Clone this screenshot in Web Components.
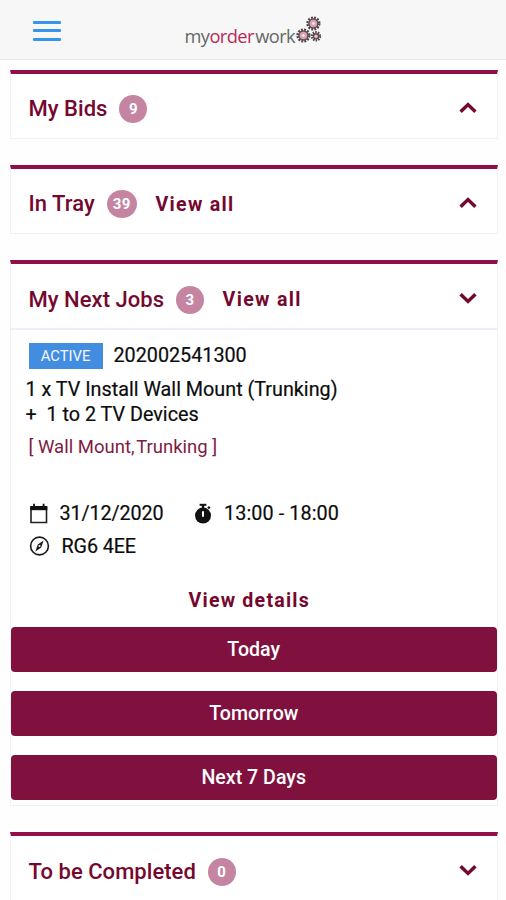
<!DOCTYPE html>
<html lang="en">
<head>
<meta charset="utf-8">
<title>myorderwork</title>
<style>
body{margin:0;background:#fefefe;font-family:Roboto,"Liberation Sans",sans-serif;width:506px;height:900px;overflow:hidden;color:#111}
</style>
</head>
<body>
<work-app></work-app>
<script>
const define = (name, html, setup) => customElements.define(name, class extends HTMLElement {
  constructor() {
    super();
    const t = document.createElement('template');
    t.innerHTML = html;
    this.attachShadow({mode: 'open'}).append(t.content.cloneNode(true));
  }
  connectedCallback() { if (setup) setup(this, this.shadowRoot); }
});

// Toothed ring used in the logo
const gear = (x, y, r, n) => {
  const c = 2 * Math.PI * r;
  return `<circle cx="${x}" cy="${y}" r="${r}" fill="none" stroke="#4c4649" stroke-width="2.4" stroke-dasharray="${c/n*.6} ${c/n*.4}"/>
  <circle cx="${x}" cy="${y}" r="${r-1.4}" fill="#dca2b2" stroke="#5d4c53" stroke-width="1.4"/>
  <circle cx="${x}" cy="${y}" r="${r*.3}" fill="#f7eef0" stroke="#cf8fa1" stroke-width=".6"/>`;
};

define('brand-logo', `<style>
:host{display:flex;align-items:flex-start;font-family:"Open Sans","Noto Sans",sans-serif;font-size:18.3px;line-height:24px;color:#666}
.word{padding-top:9px;white-space:nowrap;letter-spacing:-.6px}
b{font-weight:400;color:#b72a58;margin-right:1.5px}
svg{display:block}
</style><span class="word">my<b>order</b>work</span>
<svg width="28" height="30" viewBox="0 0 28 30">${gear(8.4,20.5,5.9,12)}${gear(18.4,8.5,5.9,12)}${gear(21,21.3,4,10)}</svg>`);

define('menu-button', `<style>
:host{display:flex;flex-direction:column;gap:5.5px;width:28px}
i{height:3px;background:#3595ee;border-radius:1px}
</style><i></i><i></i><i></i>`);

define('app-header', `<style>
:host{display:grid;grid-template-columns:184.5px auto 1fr;height:59px;background:#f7f7f7;border-bottom:1px solid #e9e9e9}
menu-button{margin:20.5px 0 0 33px}
brand-logo{margin-top:15px}
</style><menu-button></menu-button><brand-logo></brand-logo>`);

define('count-badge', `<style>
:host{display:flex;align-items:center;justify-content:center;box-sizing:border-box;min-width:28px;height:28px;border-radius:50%;background:#c585a2;color:#fff;font-size:15px;font-weight:700;line-height:28px;padding:0 6px;letter-spacing:.5px}
</style><slot></slot>`);

define('text-link', `<style>
:host{display:block;color:#75082f;font-size:19.6px;line-height:24px;font-weight:700;letter-spacing:1.3px;white-space:nowrap}
</style><slot></slot>`);

define('chevron-icon', `<style>
:host{display:block;width:20px;height:14px;margin-top:4.5px}
:host([up]) svg{transform:rotate(180deg)}
svg{display:block}
</style><svg width="20" height="14" viewBox="0 0 20 14"><path d="M2.6 3.2 10 10.4 17.4 3.2" fill="none" stroke="#75082f" stroke-width="3.5"/></svg>`);

define('job-panel', `<style>
:host{display:block;box-sizing:border-box;border:1.5px solid #f0f0f6;border-top:4.6px solid #920e49;background:#fff}
header{display:flex;align-items:center;height:64px;padding:0 19.5px 0 18px}
:host([open]) header{border-bottom:2px solid #efeffa}
h2{margin:7px 12px 0 0;font-size:22px;line-height:28px;font-weight:500;color:#75082f;white-space:nowrap;letter-spacing:.04px}
::slotted(count-badge){margin:7px 18.5px 0 0}
::slotted(text-link){margin-top:8px}
chevron-icon{margin-left:auto}
</style><header><h2></h2><slot name="head"></slot><chevron-icon></chevron-icon></header><slot></slot>`,
(el, root) => {
  root.querySelector('h2').textContent = el.getAttribute('heading');
  root.querySelector('chevron-icon').toggleAttribute('up', el.hasAttribute('up'));
});

define('status-tag', `<style>
:host{display:block;width:74px;height:26px;background:#438de0;color:#f3f8ff;text-align:center;font-size:14.8px;line-height:27px;-webkit-text-stroke:0}
</style><slot></slot>`);

define('action-button', `<style>
:host{display:block;height:45px;border-radius:4px;background:#80113e;color:#fff;text-align:center;font-size:19.6px;font-weight:500;line-height:45px}
</style><slot></slot>`);

define('job-details', `<style>
:host{display:block;font-size:19.75px;line-height:24px;color:#0c0c0c;-webkit-text-stroke:.2px}
.id{display:flex;gap:11px;padding:13px 0 0 18px;height:26px;line-height:26px}
.job{padding:8px 0 0 15px;line-height:25px;white-space:pre}
.opt{padding:8px 0 0 18px;color:#801b43;font-size:18.5px;white-space:nowrap;line-height:25px;-webkit-text-stroke:0}
.opt span{margin-left:-3px}
.row{display:flex;align-items:center;padding-left:18px;height:33px}
.when{padding-top:37px}
.row svg{flex:none;display:block}
.date{margin:0 0 0 11px;width:133px;letter-spacing:-.1px}
.time{margin-left:11.5px;letter-spacing:.1px}
.place{margin-left:12px;letter-spacing:-.1px}
text-link{text-align:center;margin:26px 0 14px;padding-right:9px;letter-spacing:1.2px;-webkit-text-stroke:0}
span{white-space:nowrap}
</style>
<div class="id"><status-tag>ACTIVE</status-tag><span class="num">202002541300</span></div>
<div class="job">1 x TV Install Wall Mount (Trunking)
+  1 to 2 TV Devices</div>
<div class="opt">[ Wall Mount, <span>Trunking ]</span></div>
<div class="row when">
<svg width="20" height="22" viewBox="0 0 20 22"><path d="M2 4.5h15.5v15H2z" fill="none" stroke="#222" stroke-width="1.6"/><path d="M1.2 3h17.1v4.2H1.2z" fill="#111"/><path d="M5 .8v4M14.6 .8v4" stroke="#111" stroke-width="1.8"/></svg>
<span class="date">31/12/2020</span>
<svg width="20" height="22" viewBox="0 0 20 22"><path d="M6.6.8h6.8v2H6.6z" fill="#111"/><path d="M10 2v3M15 5.4l1.8-1.6" stroke="#111" stroke-width="2.4"/><circle cx="10" cy="12.6" r="8" fill="#111"/><path d="M10 8.2v5.6" stroke="#fff" stroke-width="2"/></svg>
<span class="time">13:00 - 18:00</span></div>
<div class="row">
<svg width="21" height="22" viewBox="0 0 21 22"><circle cx="10.5" cy="10" r="8.9" fill="none" stroke="#181818" stroke-width="1.6"/><path fill-rule="evenodd" d="M14.6 4.6 12.2 11.4 6.4 15.4 8.8 8.6zM10.5 8.9a1.1 1.1 0 1 0 .01 2.2 1.1 1.1 0 0 0 0-2.2z" fill="#181818"/></svg>
<span class="place">RG6 4EE</span></div>
<text-link>View details</text-link>`);

define('work-app', `<style>
:host{display:block}
main{display:flex;flex-direction:column;gap:26px;padding:9.5px 8px 0 9.5px}
job-panel:not([open]){height:69.3px}
job-panel[open]{height:546px}
.actions{display:flex;flex-direction:column;gap:19px}
</style>
<app-header></app-header>
<main>
<job-panel heading="My Bids" up><count-badge slot="head">9</count-badge></job-panel>
<job-panel heading="In Tray" up><count-badge slot="head">39</count-badge><text-link slot="head">View all</text-link></job-panel>
<job-panel heading="My Next Jobs" open><count-badge slot="head">3</count-badge><text-link slot="head">View all</text-link>
<job-details></job-details>
<div class="actions"><action-button>Today</action-button><action-button>Tomorrow</action-button><action-button>Next 7 Days</action-button></div>
</job-panel>
<job-panel heading="To be Completed"><count-badge slot="head">0</count-badge></job-panel>
</main>`);
</script>
</body>
</html>
